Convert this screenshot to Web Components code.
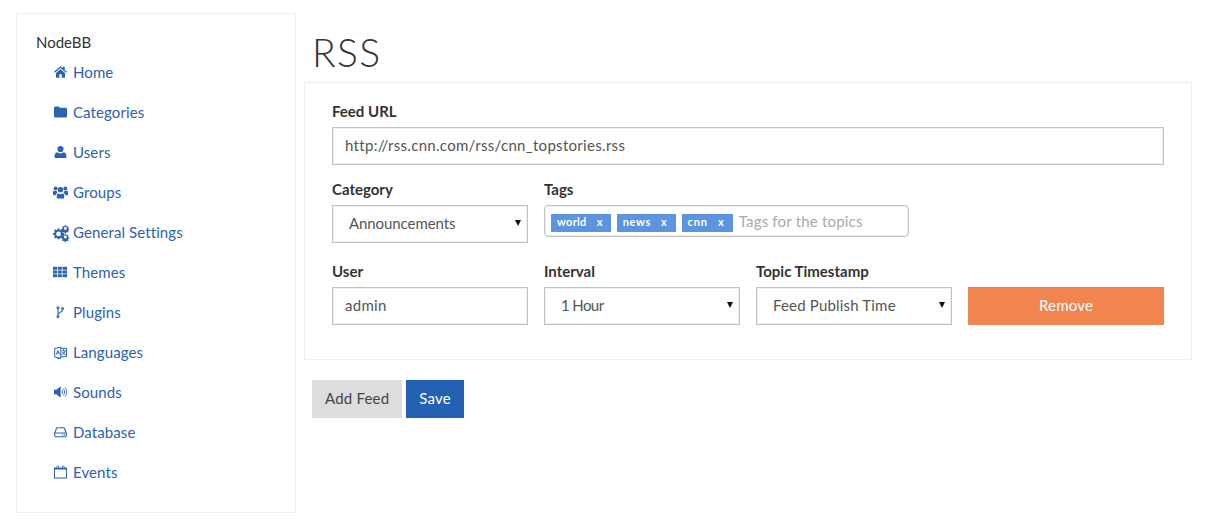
<!DOCTYPE html>
<html>
<head>
<meta charset="utf-8">
<title>RSS</title>
<style>
  html, body { margin: 0; background: #fff; }
  body { font-family: "Lato", "Liberation Sans", sans-serif; font-size: 15px; color: #333; }
</style>
</head>
<body>
<rss-page>
  <admin-sidebar slot="side" title="NodeBB">
    <nav-item icon="home">Home</nav-item>
    <nav-item icon="folder">Categories</nav-item>
    <nav-item icon="user">Users</nav-item>
    <nav-item icon="users">Groups</nav-item>
    <nav-item icon="cogs">General Settings</nav-item>
    <nav-item icon="th">Themes</nav-item>
    <nav-item icon="fork">Plugins</nav-item>
    <nav-item icon="language">Languages</nav-item>
    <nav-item icon="volume">Sounds</nav-item>
    <nav-item icon="hdd">Database</nav-item>
    <nav-item icon="calendar">Events</nav-item>
  </admin-sidebar>

  <feed-panel>
    <form-field label="Feed URL" style="grid-column: 1 / -1">
      <text-box>http://rss.cnn.com/rss/cnn_topstories.rss</text-box>
    </form-field>
    <form-field label="Category" style="margin-bottom: 4px">
      <select-box style="letter-spacing: -.08px">Announcements</select-box>
    </form-field>
    <form-field label="Tags" style="grid-column: 2 / -1">
      <tag-input placeholder="Tags for the topics">
        <tag-chip>world</tag-chip>
        <tag-chip style="letter-spacing: .7px">news</tag-chip>
        <tag-chip style="letter-spacing: .9px">cnn</tag-chip>
      </tag-input>
    </form-field>
    <form-field label="User">
      <text-box>admin</text-box>
    </form-field>
    <form-field label="Interval">
      <select-box style="letter-spacing: -.6px">1 Hour</select-box>
    </form-field>
    <form-field label="Topic Timestamp">
      <select-box>Feed Publish Time</select-box>
    </form-field>
    <form-field>
      <action-button kind="danger" wide>Remove</action-button>
    </form-field>
  </feed-panel>

  <action-button slot="actions" kind="plain">Add Feed</action-button>
  <action-button slot="actions" kind="primary">Save</action-button>
</rss-page>

<script>
const ICONS = {
  home: '<path d="M6.500 .8 0 6.300l.8 1L6.500 2.500l5.700 4.800.8-1-2.300-1.900V1.300H9v1.500zM2 7.500V12.200h3.300V8.800h2.400v3.400H11V7.500L6.500 3.700z"/>',
  folder: '<path d="M0 2.600C0 1.700.7 1 1.600 1h2.600c.8 0 1.400.6 1.500 1.300h5.700c.9 0 1.600.7 1.600 1.600v6.500c0 .9-.7 1.600-1.600 1.600H1.600C.7 12 0 11.300 0 10.400z"/>',
  user: '<circle cx="6.500" cy="3.500" r="3.100"/><path d="M1.500 12.600c-.6 0-1-.4-1-1 0-2.600.7-4.800 2.800-4.800.9.700 2 1.100 3.200 1.100s2.300-.4 3.200-1.100c2.100 0 2.800 2.200 2.800 4.800 0 .6-.4 1-1 1z"/>',
  users: '<g transform="translate(-1 -.2) scale(1.150)"><circle cx="6.500" cy="3.800" r="2.300"/><circle cx="2.300" cy="2.700" r="1.700"/><circle cx="10.700" cy="2.700" r="1.700"/><path d="M0 7.800V6C0 5 .6 4.700 1.200 4.700h2c-.1.800.3 1.500.9 2.100-1 .2-1.600.9-1.800 1.800H1C.4 8.600 0 8.300 0 7.800zM13 7.800V6c0-1-.6-1.300-1.200-1.300h-2c.1.800-.3 1.500-.9 2.100 1 .2 1.600.9 1.800 1.800h1.300c.6 0 1-.3 1-.8zM3.300 10.500V9c0-1 .6-1.800 1.500-1.800.5.400 1.100.6 1.700.6s1.200-.2 1.700-.6c.9 0 1.500.8 1.500 1.800v1.500c0 .5-.4.900-.9.900H4.200c-.5 0-.9-.4-.9-.9z"/></g>',
  cogs: '<g transform="translate(-1 -.4) scale(1.150)"><path fill-rule="evenodd" d="M4 2.900h1.700l.2 1.200.7.300 1-.7 1.200 1.200-.7 1 .3.700 1.200.2v1.700l-1.200.2-.3.700.7 1-1.200 1.200-1-.7-.7.300-.2 1.200H4l-.2-1.200-.7-.3-1 .7L.9 10.400l.7-1-.3-.7L.1 8.500V6.800l1.200-.2.3-.7-.7-1L2.100 3.700l1 .7.7-.3zM4.850 5.550a2.100 2.100 0 1 0 0 4.200 2.100 2.100 0 0 0 0-4.200z"/><path fill-rule="evenodd" d="M10.200.2h1.100l.2.800.6.300.8-.4.700.8-.5.700.2.600.8.200v1l-.8.2-.2.600.5.700-.7.800-.8-.4-.6.300-.2.800h-1.100l-.2-.8-.6-.3-.8.400-.7-.8.500-.7-.2-.6-.8-.2v-1l.8-.2.200-.6-.5-.7.700-.8.800.4.600-.3zM10.750 1.600a1.300 1.300 0 1 0 0 2.600 1.300 1.300 0 0 0 0-2.600z"/><path fill-rule="evenodd" d="M10.200 7.700h1.100l.2.800.6.300.8-.4.700.8-.5.700.2.600.8.200v1l-.8.2-.2.600.5.700-.7.800-.8-.4-.6.300-.2.800h-1.100l-.2-.8-.6-.3-.8.400-.7-.8.500-.7-.2-.6-.8-.2v-1l.8-.2.200-.6-.5-.7.700-.8.800.4.600-.3zM10.750 9.100a1.300 1.300 0 1 0 0 2.600 1.300 1.300 0 0 0 0-2.600z"/></g>',
  th: '<g transform="translate(-1 0)"><path d="M0 1.200h4.200v3H0zM4.900 1.200h3.900v3H4.900zM9.500 1.200H14v3H9.500zM0 5h4.200v3H0zM4.900 5h3.900v3H4.900zM9.500 5H14v3H9.500zM0 8.800h4.200v3H0zM4.900 8.800h3.900v3H4.900zM9.500 8.800H14v3H9.500z"/></g>',
  fork: '<g fill="none" stroke="currentColor" stroke-width="1.100" transform="translate(-.5 0)"><circle cx="4.500" cy="2.200" r="1"/><circle cx="4.500" cy="11" r="1"/><circle cx="9" cy="3" r="1"/><path d="M4.500 3.200V10M9 4c0 3.400-4.500 2.400-4.500 5.200"/></g>',
  language: '<path fill="none" stroke="currentColor" stroke-width="1" d="M6.800 1.700.7 3v8.500l6.100 1.400V1.700M6.800 2.800h5.700v8.400H6.800M2.600 11.800l1.400 1.100h2.800"/><path d="M3.700 4 1.700 9.300l1-.2.400-1.100 1.500-.2.500 1.100 1-.2zM3.400 7.200l.4-1.300.4 1.100z"/><path d="M9 3.800h1v1.100h2v.9h-.7c-.2.900-.6 1.600-1.100 2.100.5.300 1 .5 1.800.6v.9c-.9-.1-1.700-.4-2.400-.9-.6.400-1.300.7-2.100.9l-.2-.9c.6-.1 1.200-.3 1.700-.6-.4-.4-.7-.9-.9-1.500h1c.2.300.4.600.6.800.3-.3.500-.8.600-1.400H7.600v-.9H9z"/>',
  volume: '<path d="M0 4.200h2.400L6 1.200c.3-.2.600 0 .6.300v10c0 .3-.3.500-.6.300L2.400 8.800H0z"/><path fill="none" stroke="currentColor" stroke-width=".9" d="M7.800 4.700c1 .9 1 2.700 0 3.600M9.200 3.200c1.900 1.700 1.900 4.900 0 6.600M10.600 1.800c2.800 2.500 2.800 6.900 0 9.400"/>',
  hdd: '<path fill="none" stroke="currentColor" stroke-width="1.100" d="M.7 7.500v2.800c0 .5.400.9.900.9h9.800c.5 0 .9-.4.900-.9V7.500L10.400 2.700c-.1-.3-.4-.5-.7-.5H3.300c-.3 0-.6.200-.7.500zM.7 7.500h11.600"/><path d="M8.200 8.800h1v1.100h-1zM10.100 8.800h1v1.100h-1z"/>',
  calendar: '<path fill-rule="evenodd" d="M0 2h13v11H0zM1 4v8h11V4z"/><path d="M2.600.2h2.200v3H2.600zM8.200.2h2.200v3H8.200z"/><path fill="#fff" d="M3.300.9h.8v1.600h-.8zM8.900.9h.8v1.600h-.8z"/>'
};

class RssPage extends HTMLElement {
  constructor() {
    super();
    this.attachShadow({ mode: 'open' });
    this.shadowRoot.innerHTML = `
      <style>
        :host { display: flex; align-items: flex-start; width: 1217px; height: 526px; overflow: hidden; box-sizing: border-box; padding: 13px 25px 0 16px; gap: 8px; }
        main { flex: 1; min-width: 0; }
        h1 { margin: 0; height: 69px; box-sizing: border-box; padding: 15px 0 0 8px; font-size: 39px; line-height: 48px; font-weight: 300; color: #333; letter-spacing: 1.3px; }
        .actions { display: flex; gap: 4px; padding: 20px 0 0 8px; }
      </style>
      <slot name="side"></slot>
      <main>
        <h1>RSS</h1>
        <slot></slot>
        <div class="actions"><slot name="actions"></slot></div>
      </main>
    `;
  }
}

class AdminSidebar extends HTMLElement {
  constructor() {
    super();
    this.attachShadow({ mode: 'open' });
    this.shadowRoot.innerHTML = `
      <style>
        :host { display: block; flex: none; width: 280px; height: 500px; box-sizing: border-box; border: 1px solid #eee; padding: 18px 0 0 19px; }
        .title { line-height: 20px; color: #333; }
        .items { display: flex; flex-direction: column; padding-top: 10px; }
      </style>
      <div class="title"></div>
      <div class="items"><slot></slot></div>
    `;
    this.shadowRoot.querySelector('.title').textContent = this.getAttribute('title');
  }
}

class NavItem extends HTMLElement {
  constructor() {
    super();
    this.attachShadow({ mode: 'open' });
    this.shadowRoot.innerHTML = `
      <style>
        :host { display: flex; align-items: center; height: 40px; padding-left: 17px; color: #2b62b2; letter-spacing: .1px; }
        :host(:first-child) { height: 20px; margin-bottom: 10px; }
        svg { width: 14px; height: 14px; flex: none; margin-right: 6px; fill: currentColor; overflow: visible; }
      </style>
      <svg viewBox="-1 -.5 14 14">${ICONS[this.getAttribute('icon')] || ''}</svg>
      <span><slot></slot></span>
    `;
  }
}

class FeedPanel extends HTMLElement {
  constructor() {
    super();
    this.attachShadow({ mode: 'open' });
    this.shadowRoot.innerHTML = `
      <style>
        :host { display: grid; grid-template-columns: repeat(4, 196px); column-gap: 16px; row-gap: 14px; width: 888px; height: 278px; box-sizing: border-box; border: 1px solid #eee; padding: 18px 27px 0; align-content: start; }
      </style>
      <slot></slot>
    `;
  }
}

class FormField extends HTMLElement {
  constructor() {
    super();
    this.attachShadow({ mode: 'open' });
    this.shadowRoot.innerHTML = `
      <style>
        :host { display: block; }
        .label { height: 20px; line-height: 20px; margin-bottom: 6px; font-weight: 700; color: #333; }
      </style>
      <div class="label"></div>
      <slot></slot>
    `;
    this.shadowRoot.querySelector('.label').textContent = this.getAttribute('label') || '\u00a0';
  }
}

class TextBox extends HTMLElement {
  constructor() {
    super();
    this.attachShadow({ mode: 'open' });
    this.shadowRoot.innerHTML = `
      <style>
        :host { display: flex; align-items: center; height: 38px; box-sizing: border-box; border: 1px solid #c4c4c4; box-shadow: inset 0 0 0 1px #eee; padding: 0 12px 2px; color: #555; letter-spacing: .3px; }
      </style>
      <slot></slot>
    `;
  }
}

class SelectBox extends HTMLElement {
  constructor() {
    super();
    this.attachShadow({ mode: 'open' });
    this.shadowRoot.innerHTML = `
      <style>
        :host { display: flex; align-items: center; justify-content: space-between; height: 38px; box-sizing: border-box; border: 1px solid #c4c4c4; box-shadow: inset 0 0 0 1px #eee; padding: 0 6px 2px 16px; color: #555; letter-spacing: .18px; }
        i { width: 0; height: 0; border: solid transparent; border-width: 6px 3.5px 0; border-top-color: #111; }
      </style>
      <span><slot></slot></span>
      <i></i>
    `;
  }
}

class TagInput extends HTMLElement {
  constructor() {
    super();
    this.attachShadow({ mode: 'open' });
    this.shadowRoot.innerHTML = `
      <style>
        :host { display: flex; align-items: flex-start; gap: 6px; width: 365px; height: 32px; box-sizing: border-box; border: 1px solid #c4c4c4; box-shadow: inset 0 0 0 1px #eee; border-radius: 4px; padding: 8px 6px 0; }
        .ph { color: #a9a9a9; letter-spacing: .2px; line-height: 18px; margin-top: -2px; }
      </style>
      <slot></slot>
      <span class="ph"></span>
    `;
    this.shadowRoot.querySelector('.ph').textContent = this.getAttribute('placeholder');
  }
}

class TagChip extends HTMLElement {
  constructor() {
    super();
    this.attachShadow({ mode: 'open' });
    this.shadowRoot.innerHTML = `
      <style>
        :host { display: flex; align-items: center; gap: 10px; height: 18px; box-sizing: border-box; padding: 0 8px 3px 6px; background: #5b95e0; color: #fff; font-size: 11px; font-weight: 700; letter-spacing: .3px; }
      </style>
      <span><slot></slot></span>
      <span>x</span>
    `;
  }
}

class ActionButton extends HTMLElement {
  constructor() {
    super();
    this.attachShadow({ mode: 'open' });
    this.shadowRoot.innerHTML = `
      <style>
        :host { display: inline-flex; align-items: center; justify-content: center; height: 38px; box-sizing: border-box; padding: 0 13px 2px; letter-spacing: .2px; }
        :host([wide]) { display: flex; }
        :host([kind="plain"]) { background: #ddd; color: #444; }
        :host([kind="primary"]) { background: #2461b2; color: #fff; }
        :host([kind="danger"]) { background: #f2854f; color: #fff; border-top: 1px solid #ea7f48; padding-bottom: 3px; }
      </style>
      <slot></slot>
    `;
  }
}

customElements.define('rss-page', RssPage);
customElements.define('admin-sidebar', AdminSidebar);
customElements.define('nav-item', NavItem);
customElements.define('feed-panel', FeedPanel);
customElements.define('form-field', FormField);
customElements.define('text-box', TextBox);
customElements.define('select-box', SelectBox);
customElements.define('tag-input', TagInput);
customElements.define('tag-chip', TagChip);
customElements.define('action-button', ActionButton);
</script>
</body>
</html>
